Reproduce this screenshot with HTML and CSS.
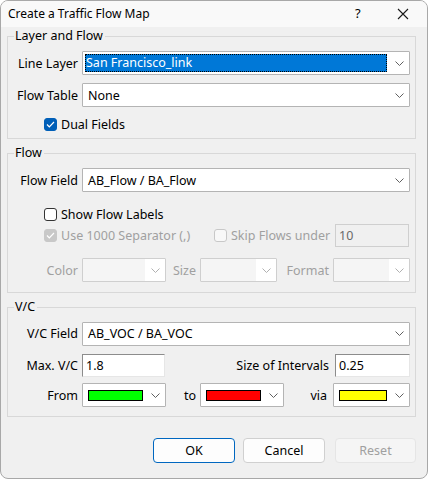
FILE: index.html
```html
<!DOCTYPE html>
<html>
<head>
<meta charset="utf-8">
<link rel="stylesheet" href="styles.css">
</head>
<body>
<div class="window">
  <div class="titlebar">
    <span class="title">Create a Traffic Flow Map</span>
    <span class="help">?</span>
    <span class="close"><svg width="12" height="12" viewBox="0 0 12 12"><path d="M1 1 L11 11 M11 1 L1 11" stroke="#1a1a1a" stroke-width="1.1" fill="none"/></svg></span>
  </div>
  <div class="content">
    <fieldset class="group g1">
      <legend>Layer and Flow</legend>
      <div class="row r1">
        <label class="lbl">Line Layer</label>
        <div class="combo wide">
          <div class="val"><span class="sel">San Francisco_link</span></div>
          <div class="arrow"><svg width="9" height="5" viewBox="0 0 9 5"><path d="M0.5 0.5 L4.5 4.5 L8.5 0.5" fill="none" stroke="#606060"/></svg></div>
        </div>
      </div>
      <div class="row r2">
        <label class="lbl">Flow Table</label>
        <div class="combo wide">
          <div class="val text">None</div>
          <div class="arrow"><svg width="9" height="5" viewBox="0 0 9 5"><path d="M0.5 0.5 L4.5 4.5 L8.5 0.5" fill="none" stroke="#606060"/></svg></div>
        </div>
      </div>
      <div class="row chkrow r3">
        <span class="chk on"><svg width="9" height="7" viewBox="0 0 9 7"><path d="M1 3.5 L3.3 5.8 L8 1" fill="none" stroke="#fff" stroke-width="1.2"/></svg></span>
        <span>Dual Fields</span>
      </div>
    </fieldset>

    <fieldset class="group g2">
      <legend>Flow</legend>
      <div class="row r1">
        <label class="lbl">Flow Field</label>
        <div class="combo wide">
          <div class="val text">AB_Flow / BA_Flow</div>
          <div class="arrow"><svg width="9" height="5" viewBox="0 0 9 5"><path d="M0.5 0.5 L4.5 4.5 L8.5 0.5" fill="none" stroke="#606060"/></svg></div>
        </div>
      </div>
      <div class="row chkrow r-show">
        <span class="chk"></span>
        <span>Show Flow Labels</span>
      </div>
      <div class="row r-sep">
        <span class="chk dis-on"><svg width="9" height="7" viewBox="0 0 9 7"><path d="M1 3.5 L3.3 5.8 L8 1" fill="none" stroke="#fff" stroke-width="1.2"/></svg></span>
        <span class="dis sep-text">Use 1000 Separator (,)</span>
        <span class="chk dis-off"></span>
        <span class="dis skip-text">Skip Flows under</span>
        <div class="input disabled skip">10</div>
      </div>
      <div class="row r-fmt">
        <label class="lbl dis">Color</label>
        <div class="combo off c1"><div class="val"></div><div class="arrow"><svg width="9" height="5" viewBox="0 0 9 5"><path d="M0.5 0.5 L4.5 4.5 L8.5 0.5" fill="none" stroke="#b0b0b0"/></svg></div></div>
        <label class="lbl dis size-l">Size</label>
        <div class="combo off c2"><div class="val"></div><div class="arrow"><svg width="9" height="5" viewBox="0 0 9 5"><path d="M0.5 0.5 L4.5 4.5 L8.5 0.5" fill="none" stroke="#b0b0b0"/></svg></div></div>
        <label class="lbl dis fmt-l">Format</label>
        <div class="combo off c2"><div class="val"></div><div class="arrow"><svg width="9" height="5" viewBox="0 0 9 5"><path d="M0.5 0.5 L4.5 4.5 L8.5 0.5" fill="none" stroke="#b0b0b0"/></svg></div></div>
      </div>
    </fieldset>

    <fieldset class="group g3">
      <legend>V/C</legend>
      <div class="row r1">
        <label class="lbl">V/C Field</label>
        <div class="combo wide">
          <div class="val text">AB_VOC / BA_VOC</div>
          <div class="arrow"><svg width="9" height="5" viewBox="0 0 9 5"><path d="M0.5 0.5 L4.5 4.5 L8.5 0.5" fill="none" stroke="#606060"/></svg></div>
        </div>
      </div>
      <div class="row r-max">
        <label class="lbl">Max. V/C</label>
        <div class="input sunk maxv">1.8</div>
        <label class="lbl grow">Size of Intervals</label>
        <div class="input sunk intv">0.25</div>
      </div>
      <div class="row r-from">
        <label class="lbl">From</label>
        <div class="combo c1 cc"><div class="val"><span class="swatch green"></span></div><div class="arrow"><svg width="9" height="5" viewBox="0 0 9 5"><path d="M0.5 0.5 L4.5 4.5 L8.5 0.5" fill="none" stroke="#606060"/></svg></div></div>
        <label class="lbl to-l">to</label>
        <div class="combo c1 cc"><div class="val"><span class="swatch red"></span></div><div class="arrow"><svg width="9" height="5" viewBox="0 0 9 5"><path d="M0.5 0.5 L4.5 4.5 L8.5 0.5" fill="none" stroke="#606060"/></svg></div></div>
        <label class="lbl grow">via</label>
        <div class="combo c2 cc"><div class="val"><span class="swatch yellow"></span></div><div class="arrow"><svg width="9" height="5" viewBox="0 0 9 5"><path d="M0.5 0.5 L4.5 4.5 L8.5 0.5" fill="none" stroke="#606060"/></svg></div></div>
      </div>
    </fieldset>

    <div class="buttons">
      <button class="btn ok">OK</button>
      <button class="btn cancel">Cancel</button>
      <button class="btn reset" disabled>Reset</button>
    </div>
  </div>
</div>
</body>
</html>
```

FILE: styles.css
```css
html, body {
  margin: 0;
  padding: 0;
  background: #ffffff;
}
body {
  font-family: "Noto Sans", "Open Sans", sans-serif;
  font-size: 12px;
  color: #000;
}
.window {
  width: 426px;
  height: 477px;
  border: 1px solid #a8a8a8;
  border-radius: 8px;
  background: #f0f0f0;
  overflow: hidden;
}
.titlebar {
  height: 26px;
  background: #f9f9f9;
  display: flex;
  align-items: center;
  padding-left: 7px;
}
.title {
  flex: 1;
  font-size: 12px;
  padding-bottom: 1px;
}
.help {
  width: 16px;
  font-size: 13px;
  margin-right: 26px;
  padding-bottom: 2px;
}
.close {
  width: 30px;
  display: flex;
  align-items: center;
  padding-bottom: 1px;
}
.content {
  padding: 1px 11px 0 6px;
}
.group {
  margin: 0;
  padding: 0 5px 0 0;
  border: 1px solid #d8d8d8;
  min-width: 0;
}
.group legend {
  margin-left: 6px;
  padding: 0 2px 0 1px;
  height: 16px;
  line-height: 16px;
  font-size: 12.5px;
}
.g1 { padding-bottom: 4px; }
.g2 { margin-top: 6px; padding-bottom: 10px; }
.g3 { margin-top: 6px; padding-bottom: 9px; }

.row {
  display: flex;
  align-items: center;
  white-space: nowrap;
}
.lbl {
  width: 70px;
  text-align: right;
  margin-right: 4px;
  flex: none;
  font-size: 12.5px;
}
.g1 .r1 { margin-top: 7px; height: 24px; }
.g1 .r2 { margin-top: 8px; height: 24px; }
.g1 .r3 { margin-top: 7px; height: 20px; }
.g2 .r1 { margin-top: 7px; height: 24px; }
.g3 .r1 { margin-top: 7px; height: 23px; }

.chkrow { padding-left: 36px; }
.chkrow span:last-child { font-size: 12.5px; }
.chk {
  width: 13px;
  height: 13px;
  box-sizing: border-box;
  border-radius: 3px;
  border: 1px solid #333;
  background: #fff;
  display: flex;
  align-items: center;
  justify-content: center;
  margin-right: 4px;
  flex: none;
}
.chk.on {
  background: #005fb8;
  border-color: #005fb8;
}
.chk.dis-on {
  background: #c8c8c8;
  border-color: #c8c8c8;
}
.chk.dis-off {
  border-color: #c8c8c8;
  background: #f8f8f8;
}
.r-show { margin-top: 13px; height: 18px; }
.r-sep { height: 24px; padding-left: 36px; }
.dis { color: #a0a0a0; font-size: 12.5px; }
.sep-text { width: 153px; flex: none; }
.skip-text { width: 104px; flex: none; color: #a0a0a0; }
.input {
  box-sizing: border-box;
  height: 23px;
  line-height: 21px;
  padding-left: 3px;
  font-size: 12.5px;
}
.input.disabled {
  border: 1px solid #cfcfcf;
  background: #f0f0f0;
  color: #6a6a6a;
  width: 74px;
  flex: none;
}
.input.sunk {
  background: #fff;
  border-style: solid;
  border-width: 1px;
  border-color: #8c8c8c #e6e6e6 #e6e6e6 #8c8c8c;
}
.maxv { width: 83px; flex: none; }
.intv { width: 75px; flex: none; }
.grow { flex: 1; width: auto; margin-right: 6px; }

.combo {
  box-sizing: border-box;
  height: 24px;
  border: 1px solid #b4b4b4;
  background: #fff;
  display: flex;
  border-radius: 1px;
  overflow: hidden;
}
.combo.wide { flex: 1; }
.combo .val {
  flex: 1;
  min-width: 0;
  display: flex;
  align-items: center;
  padding: 2px;
}
.combo .val.text {
  padding-left: 5px;
  font-size: 12.5px;
}
.combo .sel {
  flex: 1;
  align-self: stretch;
  background: #0078d7;
  color: #fff;
  outline: 1px dotted #000;
  outline-offset: -1px;
  padding-left: 1px;
  line-height: 18px;
  font-size: 12.5px;
}
.combo .arrow {
  width: 20px;
  display: flex;
  align-items: center;
  justify-content: center;
  flex: none;
}
.combo.off {
  border-color: #cfcfcf;
}
.combo.off .val { background: #f5f5f5; }
.c1 { width: 84px; flex: none; }
.c2 { width: 77px; flex: none; }
.r-fmt { margin-top: 11px; height: 24px; }
.size-l { width: 30px; }
.fmt-l { width: 52px; }

.r-max { margin-top: 9px; height: 23px; }
.r-from { margin-top: 6px; height: 24px; }
.to-l { width: 30px; }
.cc .val { padding-left: 5px; }
.swatch {
  width: 55px;
  height: 11px;
  box-sizing: border-box;
  border: 1px solid #000;
  display: block;
  flex: none;
}
.c2 .swatch { width: 48px; }
.green { background: #00ff00; }
.red { background: #ff0000; }
.yellow { background: #ffff00; }

.buttons {
  display: flex;
  justify-content: flex-end;
  margin-top: 21px;
}
.btn {
  height: 25px;
  width: 82px;
  box-sizing: border-box;
  border-radius: 4px;
  font-family: "Noto Sans", "Open Sans", sans-serif;
  font-size: 12.5px;
  background: #fdfdfd;
  border: 1px solid #d0d0d0;
  color: #000;
  padding: 0;
}
.btn.ok { border-color: #0067c0; }
.btn.cancel { margin-left: 8px; }
.btn.reset {
  margin-left: 10px;
  width: 81px;
  background: #f5f5f5;
  border-color: #e5e5e5;
  color: #a0a0a0;
}
```
